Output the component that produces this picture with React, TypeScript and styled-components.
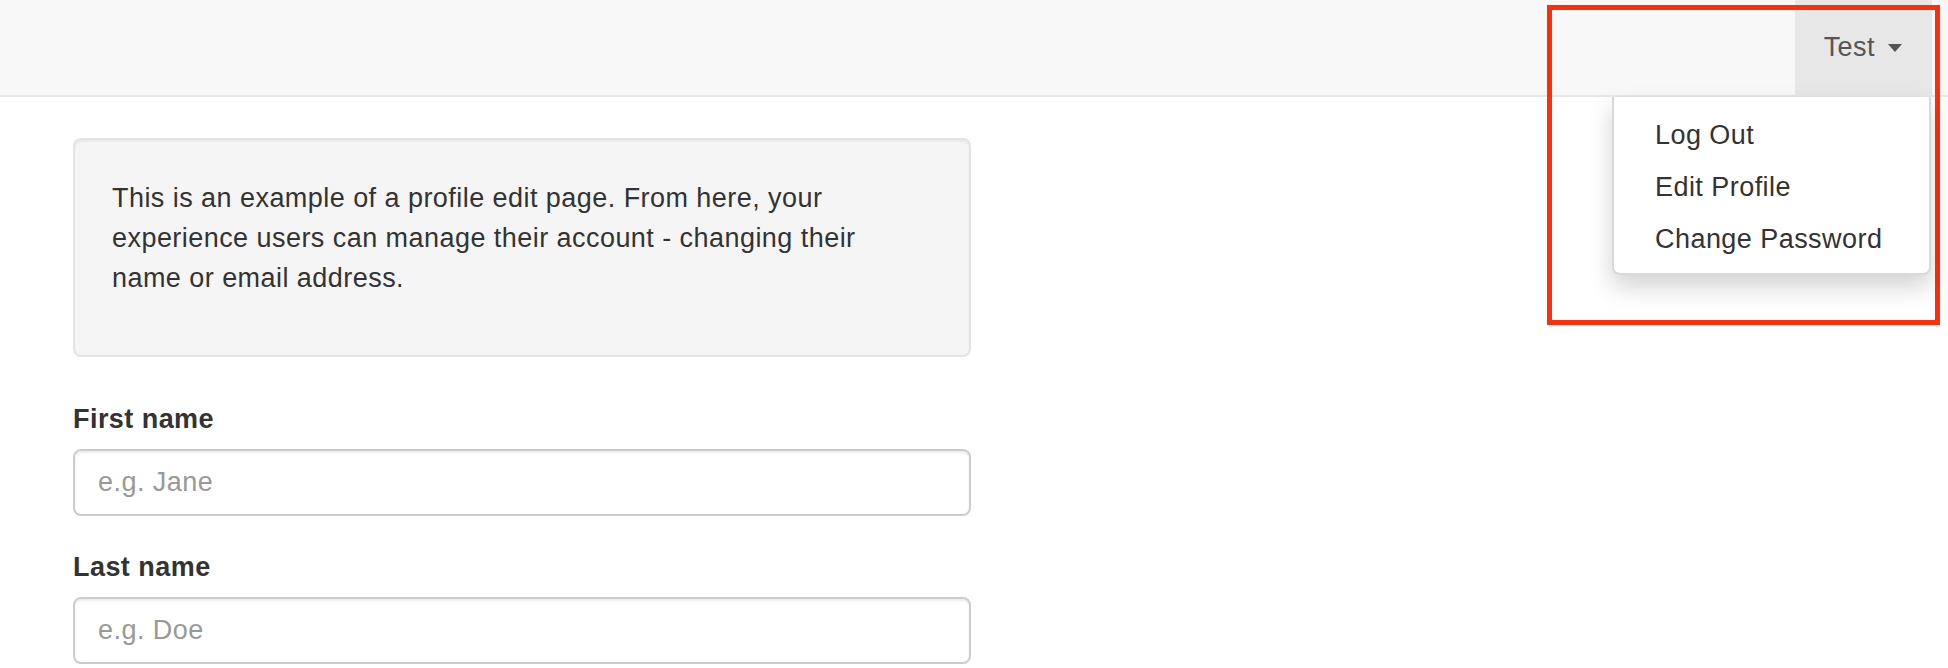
import React from 'react';
import styled, { createGlobalStyle } from 'styled-components';

const GlobalStyle = createGlobalStyle`
  html, body {
    margin: 0;
    padding: 0;
    background: #ffffff;
  }

  body {
    width: 1948px;
    height: 668px;
    overflow: hidden;
    font-family: 'Liberation Sans', Arial, sans-serif;
    letter-spacing: 0.45px;
    color: #333333;
  }

  * {
    box-sizing: border-box;
  }
`;

const MENU_ITEMS = ['Log Out', 'Edit Profile', 'Change Password'];

const App: React.FC = () => {
  return (
    <SPage>
      <GlobalStyle />
      <SNavbar>
        <SNavRight>
          <SToggle>
            Test
            <SCaret />
          </SToggle>
          <SDropdownMenu>
            {MENU_ITEMS.map((item) => (
              <SMenuItem key={item}>{item}</SMenuItem>
            ))}
          </SDropdownMenu>
        </SNavRight>
      </SNavbar>

      <SContent>
        <SWell>
          <SWellText>
            This is an example of a profile edit page. From here, your
            <br />
            experience users can manage their account - changing their
            <br />
            name or email address.
          </SWellText>
        </SWell>

        <SFormGroup>
          <SLabel htmlFor="first-name">First name</SLabel>
          <SInput id="first-name" type="text" placeholder="e.g. Jane" />
        </SFormGroup>

        <SFormGroup>
          <SLabel htmlFor="last-name">Last name</SLabel>
          <SInput id="last-name" type="text" placeholder="e.g. Doe" />
        </SFormGroup>
      </SContent>

      <SHighlight />
    </SPage>
  );
};

const SPage = styled.div`
  position: relative;
  width: 1948px;
  height: 668px;
`;

const SNavbar = styled.nav`
  display: flex;
  justify-content: flex-end;

  width: 100%;
  height: 97px;
  padding-right: 16px;
  background: #f8f8f8;
  border-bottom: 2px solid #e7e7e7;
`;

const SNavRight = styled.div`
  position: relative;
  display: flex;
  height: 95px;
`;

const SToggle = styled.a`
  display: flex;
  align-items: center;

  height: 95px;
  padding: 0 30px 1px 29px;
  background: #e7e7e7;
  color: #555555;
  font-size: 27px;
  line-height: 40px;
  cursor: pointer;
`;

const SCaret = styled.span`
  display: inline-block;
  width: 0;
  height: 0;
  margin-left: 13px;
  margin-top: 2px;
  border-top: 8px solid #555555;
  border-left: 7.5px solid transparent;
  border-right: 7.5px solid transparent;
`;

const SDropdownMenu = styled.ul`
  position: absolute;
  top: calc(100% + 2px);
  right: 1px;
  z-index: 10;

  width: 319px;
  margin: 0;
  padding: 12px 0 8px;
  list-style: none;
  background: #ffffff;
  border: 2px solid rgba(0, 0, 0, 0.15);
  border-top: none;
  border-radius: 0 0 8px 8px;
  box-shadow: 0 12px 24px rgba(0, 0, 0, 0.175);
`;

const SMenuItem = styled.li`
  padding: 6px 40px 6px 41px;
  font-size: 27px;
  line-height: 40px;
  color: #333333;
  white-space: nowrap;
  cursor: pointer;
`;

const SContent = styled.main`
  display: flex;
  flex-direction: column;

  width: 971px;
  padding: 41px 0 0 73px;
`;

const SWell = styled.div`
  width: 898px;
  min-height: 219px;
  padding: 38px 37px 18px;
  margin-bottom: 42px;
  background: #f5f5f5;
  border: 2px solid #e3e3e3;
  border-radius: 8px;
  box-shadow: inset 0 2px 2px rgba(0, 0, 0, 0.05);
`;

const SWellText = styled.p`
  margin: 0 0 20px;
  font-size: 27px;
  line-height: 40px;
  color: #333333;
  white-space: nowrap;
`;

const SFormGroup = styled.div`
  display: flex;
  flex-direction: column;
  margin-bottom: 31px;
`;

const SLabel = styled.label`
  margin-bottom: 10px;
  font-size: 27px;
  font-weight: 700;
  line-height: 40px;
  color: #333333;
`;

const SInput = styled.input`
  width: 898px;
  height: 67px;
  padding: 0 23px;
  font-family: 'Liberation Sans', Arial, sans-serif;
  font-size: 27px;
  letter-spacing: 0.45px;
  color: #555555;
  background: #ffffff;
  border: 2px solid #cccccc;
  border-radius: 8px;
  box-shadow: inset 0 2px 2px rgba(0, 0, 0, 0.075);
  outline: none;

  &::placeholder {
    color: #999999;
  }
`;

const SHighlight = styled.div`
  position: absolute;
  top: 5px;
  left: 1547px;

  width: 393px;
  height: 320px;
  border: 5px solid #fe2d0c;
  pointer-events: none;
`;

export default App;
